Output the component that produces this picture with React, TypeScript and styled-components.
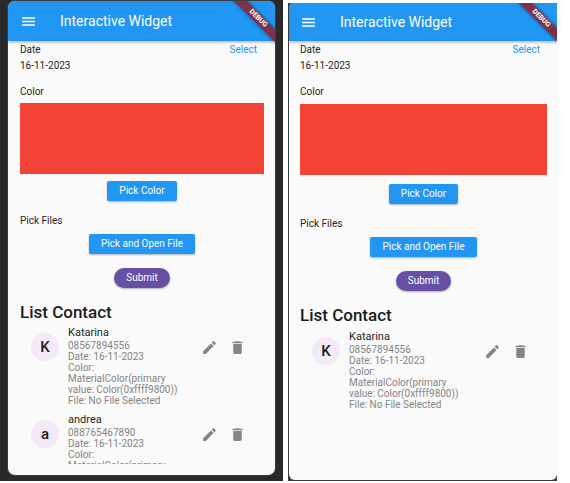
import React from "react";
import styled, { createGlobalStyle, css } from "styled-components";
import { MdDelete, MdEdit, MdMenu } from "react-icons/md";

const GlobalStyle = createGlobalStyle`
  * { box-sizing: border-box; }
  body { margin: 0; background: #ffffff; font-family: Roboto, sans-serif; }
  button, h1, h2, p, ul { margin: 0; padding: 0; }
`;

type Variant = { $cropped: boolean };

const Page = styled.main`
  display: grid;
  grid-template-columns: 283fr 269fr;
  column-gap: 5px;
  height: 100vh;
  padding: 0 13px 2px 0;
`;

const Device = styled.section<Variant>`
  display: flex;
  min-width: 0;
  min-height: 0;
  background: #292929;
  padding: 1px 8px 6px;
  ${(p) =>
    p.$cropped &&
    css`
      margin-top: 3px;
      padding: 0 0 1px 1px;
      background: #3a3a3a;
    `}
`;

const Screen = styled.div<Variant>`
  position: relative;
  flex: 1;
  min-width: 0;
  display: flex;
  flex-direction: column;
  overflow: hidden;
  background: #fafafa;
  color: #262626;
  border-radius: ${(p) => (p.$cropped ? "5px 0 6px 6px" : "7px")};
  box-shadow: ${(p) => (p.$cropped ? "none" : "0 0 0 1px #3c3c3c")};
`;

const AppBar = styled.header<Variant>`
  display: flex;
  align-items: center;
  flex: none;
  gap: 23px;
  height: ${(p) => (p.$cropped ? 38 : 40)}px;
  padding-left: ${(p) => (p.$cropped ? 11 : 12)}px;
  color: #ffffff;
  background: #2196f3;
  box-shadow: 0 1px 3px rgba(0, 0, 0, 0.35);
`;

const Title = styled.h1`
  font-size: 14px;
  line-height: 16px;
  font-weight: 400;
  white-space: nowrap;
`;

const IconButton = styled.button`
  display: flex;
  border: 0;
  background: none;
  color: inherit;
  font-size: 17px;
`;

const Ribbon = styled.div<Variant>`
  position: absolute;
  top: ${(p) => (p.$cropped ? 11 : 13)}px;
  right: ${(p) => (p.$cropped ? -24 : -23)}px;
  width: 80px;
  background: #80304a;
  color: #ffffff;
  font-size: 7px;
  line-height: 9px;
  font-weight: 700;
  text-align: center;
  transform: rotate(45deg);
  box-shadow: 0 0 4px rgba(0, 0, 0, 0.5);
`;

const Content = styled.div<Variant>`
  flex: 1;
  min-height: 0;
  display: flex;
  flex-direction: column;
  padding: ${(p) => (p.$cropped ? "1px 10px 11px 11px" : "1px 11px 11px 12px")};
`;

const Label = styled.p`
  font-size: 10px;
  line-height: 16px;
`;

const DateRow = styled.div`
  display: flex;
  justify-content: space-between;
  padding-right: 7px;
`;

const TextButton = styled.button`
  border: 0;
  background: none;
  color: #2196f3;
  font: 400 10px/16px Roboto, sans-serif;
`;

const ColorField = styled.div<Variant>`
  display: flex;
  flex-direction: column;
  gap: ${(p) => (p.$cropped ? 4 : 3)}px;
  padding-top: 10px;
`;

const Swatch = styled.div`
  height: 71px;
  background: #f44336;
`;

const Actions = styled.div<Variant>`
  display: flex;
  flex-direction: column;
  align-items: center;
  padding-top: ${(p) => (p.$cropped ? 9 : 7)}px;
`;

const FilesField = styled.div`
  padding-top: 12px;
`;

const FileActions = styled.div`
  display: flex;
  flex-direction: column;
  align-items: center;
  gap: 14px;
  padding-top: 5px;
`;

const Button = styled.button<{ $submit?: boolean }>`
  height: 20px;
  border: 0;
  padding: 0 12px;
  border-radius: ${(p) => (p.$submit ? 10 : 2)}px;
  background: ${(p) => (p.$submit ? "#6750a4" : "#2196f3")};
  color: #ffffff;
  font: 400 10px/20px Roboto, sans-serif;
  white-space: nowrap;
  box-shadow: 0 1px 2px rgba(0, 0, 0, 0.3);
`;

const Heading = styled.h2`
  padding-top: 14px;
  font-size: 17px;
  line-height: 20px;
  font-weight: 500;
  color: #1c1c1c;
`;

const ContactList = styled.ul`
  flex: 1;
  min-height: 0;
  overflow: hidden;
  list-style: none;
`;

const Contact = styled.li<Variant>`
  display: grid;
  grid-template-columns: 28px 1fr auto;
  column-gap: 9px;
  align-items: start;
  padding: ${(p) => (p.$cropped ? "4px 18px 3px 12px" : "3px 18px 3px 11px")};
`;

const Avatar = styled.div`
  margin-top: 8px;
  width: 28px;
  line-height: 28px;
  border-radius: 50%;
  background: #f4eaf7;
  color: #1c1c1c;
  text-align: center;
  font-size: 15px;
  font-weight: 500;
`;

const Name = styled.p`
  font-size: 11px;
  line-height: 15px;
`;

const Detail = styled.p`
  font-size: 10px;
  line-height: 11px;
  color: #858585;
  white-space: nowrap;
`;

const RowActions = styled.div`
  display: flex;
  gap: 11px;
  margin-top: 14px;
  color: #858585;
`;

type Person = { name: string; phone: string };

const details = [
  "Date: 16-11-2023",
  "Color:",
  "MaterialColor(primary",
  "value: Color(0xffff9800))",
  "File: No File Selected",
];

const katarina: Person = { name: "Katarina", phone: "08567894556" };
const andrea: Person = { name: "andrea", phone: "088765467890" };

function Phone({ contacts, cropped = false }: { contacts: Person[]; cropped?: boolean }) {
  return (
    <Device $cropped={cropped}>
      <Screen $cropped={cropped}>
        <AppBar $cropped={cropped}>
          <IconButton aria-label="Menu"><MdMenu /></IconButton>
          <Title>Interactive Widget</Title>
          <Ribbon $cropped={cropped}>DEBUG</Ribbon>
        </AppBar>
        <Content $cropped={cropped}>
          <DateRow>
            <Label>Date</Label>
            <TextButton>Select</TextButton>
          </DateRow>
          <Label>16-11-2023</Label>
          <ColorField $cropped={cropped}>
            <Label>Color</Label>
            <Swatch />
          </ColorField>
          <Actions $cropped={cropped}>
            <Button>Pick Color</Button>
          </Actions>
          <FilesField>
            <Label>Pick Files</Label>
            <FileActions>
              <Button>Pick and Open File</Button>
              <Button $submit>Submit</Button>
            </FileActions>
          </FilesField>
          <Heading>List Contact</Heading>
          <ContactList>
            {contacts.map((c) => (
              <Contact key={c.phone} $cropped={cropped}>
                <Avatar>{c.name[0]}</Avatar>
                <div>
                  <Name>{c.name}</Name>
                  {[c.phone, ...details].map((line) => (
                    <Detail key={line}>{line}</Detail>
                  ))}
                </div>
                <RowActions>
                  <IconButton aria-label={`Edit ${c.name}`}><MdEdit /></IconButton>
                  <IconButton aria-label={`Delete ${c.name}`}><MdDelete /></IconButton>
                </RowActions>
              </Contact>
            ))}
          </ContactList>
        </Content>
      </Screen>
    </Device>
  );
}

export default function App() {
  return (
    <>
      <GlobalStyle />
      <Page>
        <Phone contacts={[katarina, andrea]} />
        <Phone contacts={[katarina]} cropped />
      </Page>
    </>
  );
}
